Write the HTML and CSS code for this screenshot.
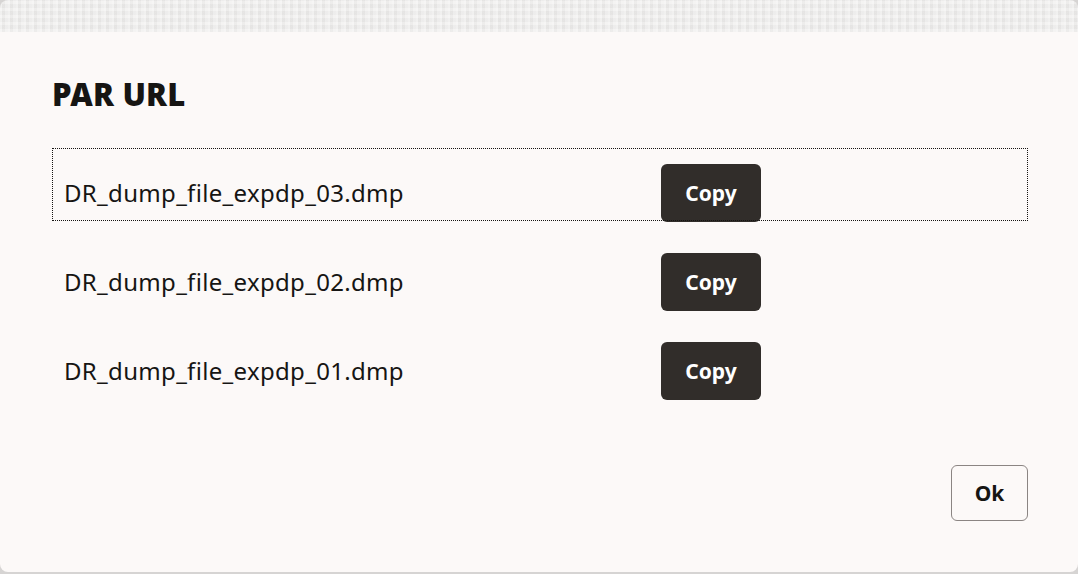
FILE: index.html
```html
<!DOCTYPE html>
<html>
<head>
<meta charset="utf-8">
<link rel="stylesheet" href="styles.css">
</head>
<body>
<div class="backdrop"></div>
<div class="dialog">
  <h1 class="title">PAR URL</h1>
  <div class="list">
    <div class="row focused">
      <span class="name">DR_dump_file_expdp_03.dmp</span>
      <button class="copy">Copy</button>
    </div>
    <div class="row">
      <span class="name">DR_dump_file_expdp_02.dmp</span>
      <button class="copy">Copy</button>
    </div>
    <div class="row">
      <span class="name">DR_dump_file_expdp_01.dmp</span>
      <button class="copy">Copy</button>
    </div>
  </div>
  <div class="footer">
    <button class="ok">Ok</button>
  </div>
</div>
</body>
</html>
```
FILE: styles.css
```css
html, body {
  margin: 0;
  padding: 0;
}
body {
  width: 1078px;
  height: 574px;
  overflow: hidden;
  background: #d6d4d3;
  font-family: "Noto Sans", "Open Sans", sans-serif;
  color: #161513;
}
.backdrop {
  height: 32px;
  border-radius: 8px 8px 0 0;
  background-color: #ecebea;
  background-image:
    repeating-linear-gradient(90deg, rgba(255,255,255,0.35) 0 2px, rgba(0,0,0,0.015) 2px 5px, rgba(255,255,255,0.2) 5px 8px),
    repeating-linear-gradient(0deg, rgba(255,255,255,0.25) 0 3px, rgba(0,0,0,0.01) 3px 7px);
}
.dialog {
  height: 540px;
  box-sizing: border-box;
  background: #fcf9f8;
  border-radius: 0 0 8px 8px;
  padding: 0 50px 51px 52px;
  display: flex;
  flex-direction: column;
}
.title {
  margin: 43px 0 0 0;
  font-size: 31px;
  line-height: 38px;
  font-weight: 900;
  letter-spacing: 0.2px;
}
.list {
  margin-top: 35px;
  display: flex;
  flex-direction: column;
}
.row {
  position: relative;
  height: 89px;
  display: flex;
  align-items: center;
  padding-left: 12px;
}
.row.focused::before {
  content: "";
  position: absolute;
  left: 0;
  right: 0;
  top: 0;
  height: 73px;
  border: 1px dotted #161513;
  box-sizing: border-box;
}
.name {
  font-size: 24px;
  letter-spacing: 0.32px;
  line-height: 32px;
}
.copy {
  margin-left: 257px;
  width: 100px;
  height: 58px;
  border: none;
  border-radius: 6px;
  background: #312d2a;
  color: #ffffff;
  font-family: inherit;
  font-size: 21px;
  font-weight: 700;
}
.footer {
  margin-top: auto;
  display: flex;
  justify-content: flex-end;
}
.ok {
  width: 77px;
  height: 56px;
  border: 1px solid #8b8583;
  border-radius: 6px;
  background: #fcf9f8;
  color: #161513;
  font-family: inherit;
  font-size: 21px;
  font-weight: 700;
}
```
